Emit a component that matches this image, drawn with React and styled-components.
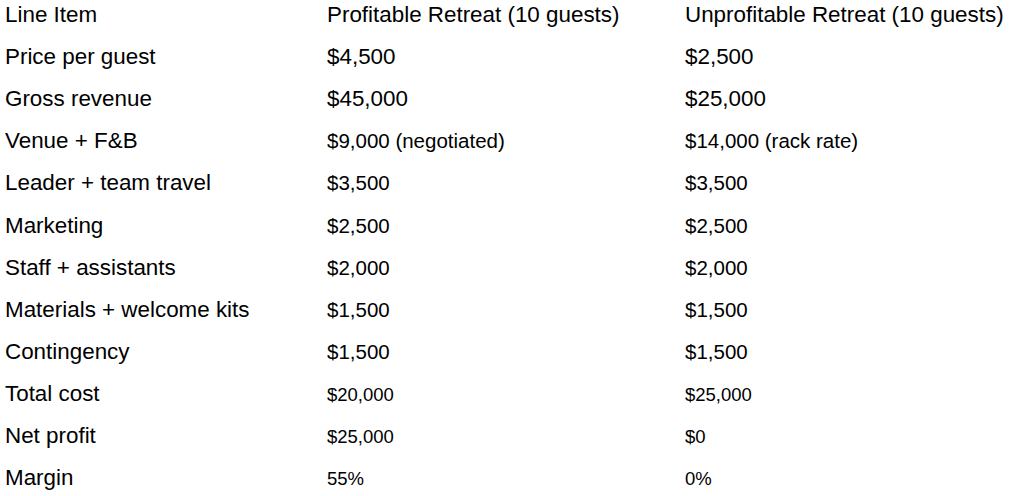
import React from "react"
import styled, { createGlobalStyle } from "styled-components"

const GlobalStyle = createGlobalStyle`
    html, body {
        margin: 0;
        padding: 0;
        background: #ffffff;
    }
    body {
        font-family: "Liberation Sans", Arial, sans-serif;
        color: #000000;
        overflow: hidden;
    }
`

const Table = styled.div`
    display: flex;
    flex-direction: column;
    margin-top: -6px;
    padding-left: 5px;
`

const Row = styled.div`
    display: grid;
    grid-template-columns: 322px 358px 1fr;
    align-items: center;
    height: 42.1px;
    white-space: nowrap;
`

const Label = styled.div`
    font-size: 22.4px;
`

const Value = styled.div`
    font-size: ${props => props.size}px;
    padding-top: ${props => (props.size < 19 ? 2 : 0)}px;
`

const rows = [
    ["Line Item", "Profitable Retreat (10 guests)", "Unprofitable Retreat (10 guests)", 22.4],
    ["Price per guest", "$4,500", "$2,500", 22.4],
    ["Gross revenue", "$45,000", "$25,000", 22.4],
    ["Venue + F&B", "$9,000 (negotiated)", "$14,000 (rack rate)", 20.5],
    ["Leader + team travel", "$3,500", "$3,500", 20.5],
    ["Marketing", "$2,500", "$2,500", 20.5],
    ["Staff + assistants", "$2,000", "$2,000", 20.5],
    ["Materials + welcome kits", "$1,500", "$1,500", 20.5],
    ["Contingency", "$1,500", "$1,500", 20.5],
    ["Total cost", "$20,000", "$25,000", 18.5],
    ["Net profit", "$25,000", "$0", 18.5],
    ["Margin", "55%", "0%", 18.5],
]

const App = () => {
    return (
        <>
            <GlobalStyle />
            <Table>
                {rows.map(([label, good, bad, size]) => (
                    <Row key={label}>
                        <Label>{label}</Label>
                        <Value size={size}>{good}</Value>
                        <Value size={size}>{bad}</Value>
                    </Row>
                ))}
            </Table>
        </>
    )
}

export default App
